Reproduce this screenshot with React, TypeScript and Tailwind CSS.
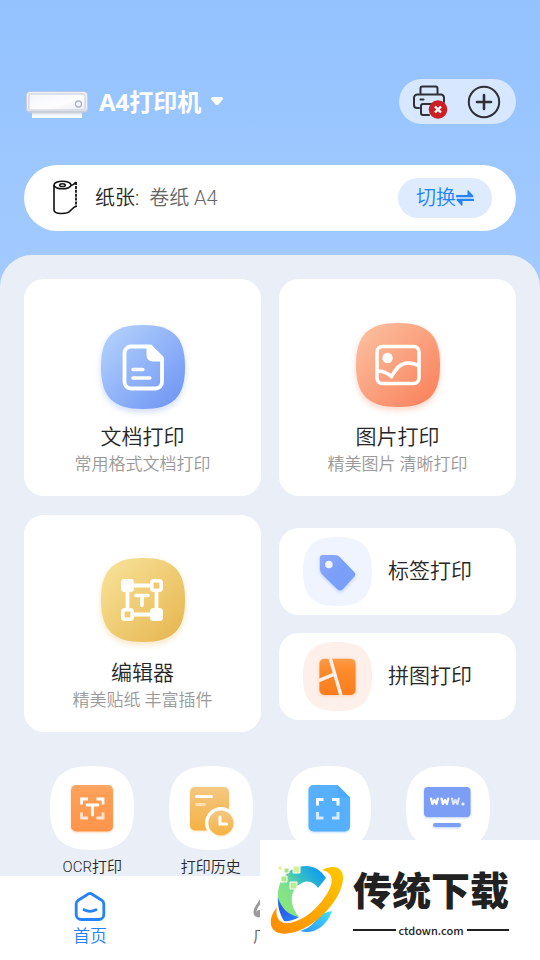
import type { ReactNode } from 'react'

const SQUIRCLE = 'M42 0C72 0 84 12 84 42S72 84 42 84 0 72 0 42 12 0 42 0Z'

interface TileProps {
  id: string
  from: string
  to: string
  className?: string
  children: ReactNode
}

function Tile({ id, from, to, className, children }: TileProps) {
  return (
    <svg viewBox="0 0 84 84" className={className} fill="none" overflow="visible" aria-hidden="true">
      <defs>
        <linearGradient id={id} x1="0" y1="0" x2="1" y2="1">
          <stop offset="0.05" stopColor={from} />
          <stop offset="0.9" stopColor={to} />
        </linearGradient>
      </defs>
      <path d={SQUIRCLE} fill={`url(#${id})`} />
      {children}
    </svg>
  )
}

function PrinterPhoto() {
  return (
    <svg viewBox="0 -6 64 36" className="h-9 w-16" aria-hidden="true">
      <defs>
        <linearGradient id="printer-body" x1="0" y1="0" x2="1" y2="1">
          <stop offset="0" stopColor="#f3f5fa" />
          <stop offset="0.6" stopColor="#fdfdff" />
          <stop offset="1" stopColor="#e9ecf3" />
        </linearGradient>
        <linearGradient id="printer-paper" x1="0" y1="0" x2="0" y2="1">
          <stop offset="0" stopColor="#b9c0cd" />
          <stop offset="0.6" stopColor="#f4f7fc" />
          <stop offset="1" stopColor="#ffffff" />
        </linearGradient>
      </defs>
      <path d="M8 21h50v7H8z" fill="url(#printer-paper)" />
      <rect x="2" y="1.5" width="62" height="21" rx="4" fill="#c9ced8" />
      <rect x="3" y="2" width="60" height="19" rx="3.5" fill="#eff1f6" />
      <rect x="5" y="4" width="56" height="16" rx="1.5" fill="url(#printer-body)" stroke="#c6cbd6" />
      <circle cx="54.5" cy="14" r="3" fill="#f4f6fa" stroke="#aeb5c1" strokeWidth="1.3" />
    </svg>
  )
}

function PrinterOffIcon() {
  return (
    <svg viewBox="-1 0 36 36" className="size-9" fill="none" overflow="visible" aria-hidden="true">
      <g stroke="#2e3033" strokeWidth="2" strokeLinejoin="round" strokeLinecap="round">
        <path d="M8.500 10V4.500a2 2 0 0 1 2-2h13a2 2 0 0 1 2 2V10" />
        <path d="M7 24H5a3 3 0 0 1-3-3v-7a3.500 3.500 0 0 1 3.500-3.500h24A3.500 3.500 0 0 1 32 14v4" />
        <path d="M8.500 15.500h3" />
        <path d="M22 20H11a2 2 0 0 0-2 2v7a2 2 0 0 0 2 2h6" />
      </g>
      <circle cx="26" cy="25.500" r="9.300" fill="#cb1f24" />
      <path d="m23 22.500 6 6m0-6-6 6" stroke="#fff" strokeWidth="2.400" />
    </svg>
  )
}

function AddIcon() {
  return (
    <svg viewBox="0 0 34 34" className="size-[34px]" fill="none" stroke="#2e3033" strokeLinecap="round" aria-hidden="true">
      <circle cx="17" cy="17" r="15.200" strokeWidth="2" />
      <path d="M17 10v14M10 17h14" strokeWidth="2.600" />
    </svg>
  )
}

function PaperRollIcon() {
  return (
    <svg viewBox="0 0 26 36" className="h-9 w-[26px]" fill="none" stroke="#111" strokeWidth="1.600" strokeLinejoin="round" aria-hidden="true">
      <ellipse cx="10.500" cy="5" rx="8.500" ry="3.800" />
      <ellipse cx="10.500" cy="5.200" rx="2.800" ry="1.400" strokeWidth="1.500" />
      <path d="M2 5v25c0 4.500 13 4.500 16 1 2-2.300 4-4 6.500-5" />
      <path d="M19 5.500c2-.5 3.800-1.800 5-3.500" />
      <path d="M24 2v25" strokeWidth="1.800" strokeDasharray="3 0.900" />
    </svg>
  )
}

function SwapIcon() {
  return (
    <svg viewBox="0 0 18 16" className="h-4 w-[18px]" fill="#2482fa" aria-hidden="true">
      <path d="M1 5h10.500V.8c0-.5.6-.7 1-.3l4.700 5c.6.700.200 1.700-.7 1.700H1A1.100 1.100 0 0 1 1 5Z" />
      <path d="M17 11H6.500v4.200c0 .5-.6.700-1 .3l-4.700-5C.2 9.800.600 8.800 1.500 8.800H17a1.100 1.100 0 0 1 0 2.200Z" />
    </svg>
  )
}

function DocumentTile() {
  return (
    <Tile id="tile-doc" from="#b4d2fc" to="#7299f5" className="mb-3 size-21 drop-shadow-[0_3px_3px_rgba(114,153,245,0.35)]">
      <path d="M46 21.500H30a6.500 6.500 0 0 0-6.500 6.500v29a6.500 6.500 0 0 0 6.500 6.500h24.500a6.500 6.500 0 0 0 6.500-6.500V35.500" stroke="#fff" strokeWidth="3.800" />
      <path d="M45.500 19.600h3.700a3 3 0 0 1 2 .8L62 31.200a3 3 0 0 1 .9 2.100V36.500H51.500a6 6 0 0 1-6-6Z" fill="#fff" />
      <path d="M32 44.500h9.800M32 53h16.800" stroke="#fff" strokeWidth="3.600" strokeLinecap="round" />
    </Tile>
  )
}

function PictureTile() {
  return (
    <Tile id="tile-picture" from="#fcc0a0" to="#fa845f" className="mb-[14px] size-21 drop-shadow-[0_3px_3px_rgba(250,132,95,0.35)]">
      <rect x="21" y="23.500" width="42" height="37" rx="5.500" stroke="#fff" strokeWidth="3.600" />
      <circle cx="31.500" cy="35" r="5.200" fill="#fff" />
      <path d="M21 48.500c5-.8 9.500.8 14.500 5 3.500-6.500 8-13.500 16.500-13.500 4 0 7.500.8 11 3" stroke="#fff" strokeWidth="3.600" />
    </Tile>
  )
}

function EditorTile() {
  return (
    <Tile id="tile-editor" from="#f7e298" to="#e8b955" className="mb-[15px] size-21 drop-shadow-[0_3px_3px_rgba(232,185,85,0.35)]">
      <path d="M26.500 27.500h29v29h-29z" stroke="#fff" strokeWidth="3.800" />
      <rect x="20" y="21" width="13" height="13" rx="3.500" fill="#fff" />
      <rect x="49" y="50" width="13" height="13" rx="3.500" fill="#fff" />
      <rect x="50.800" y="22.800" width="9.400" height="9.400" rx="2" fill="#efcb6e" stroke="#fff" strokeWidth="3.600" />
      <rect x="21.800" y="51.800" width="9.400" height="9.400" rx="2" fill="#efcd73" stroke="#fff" strokeWidth="3.600" />
      <path d="M35 37.500h12M41 38v9.500" stroke="#fff" strokeWidth="3.600" strokeLinecap="round" />
    </Tile>
  )
}

function TagTile() {
  return (
    <Tile id="tile-tag" from="#eff4fe" to="#eff4fe" className="size-[69px]">
      <defs>
        <linearGradient id="tag-fill" x1="0" y1="0" x2="0.700" y2="0.700">
          <stop offset="0" stopColor="#8eaaf8" />
          <stop offset="0.700" stopColor="#7a9ff8" />
        </linearGradient>
      </defs>
      <g className="drop-shadow-[0_2px_2px_rgba(122,159,248,0.4)]">
        <path
          d="M24 22h14c3 0 5 .8 7 2.600l17 17.600c2.500 2.600 2.200 4.200 0 6.400L48.500 63.500c-2.200 2.300-4.500 2.300-6.700 0L23.500 45.500c-2-2-3-4.300-3-7V26c0-2.500 1-4 3.500-4Z"
          fill="url(#tag-fill)"
        />
      </g>
      <circle cx="31.500" cy="33.500" r="4.600" fill="#eff4fe" />
    </Tile>
  )
}

function CollageTile() {
  return (
    <Tile id="tile-collage" from="#fdefea" to="#fdefea" className="size-[69px]">
      <defs>
        <linearGradient id="collage-fill" x1="0" y1="0" x2="0" y2="1">
          <stop offset="0" stopColor="#fd9a48" />
          <stop offset="0.300" stopColor="#fd8b2b" />
          <stop offset="1" stopColor="#fb7d1d" />
        </linearGradient>
      </defs>
      <rect x="20" y="20.500" width="44" height="44" rx="6" fill="url(#collage-fill)" className="drop-shadow-[0_1px_2px_rgba(251,125,29,0.3)]" />
      <path d="M33 19.500 46.500 66M19 47l18.500-7.500" stroke="#fdefea" strokeWidth="4.200" />
    </Tile>
  )
}

function OcrTile() {
  return (
    <Tile id="tile-ocr" from="#fff" to="#fff" className="size-21">
      <defs>
        <linearGradient id="ocr-fill" x1="0" y1="0" x2="0" y2="1">
          <stop offset="0" stopColor="#fda668" />
          <stop offset="0.200" stopColor="#fe9e55" />
          <stop offset="1" stopColor="#ff954b" />
        </linearGradient>
      </defs>
      <rect x="21" y="19" width="42" height="46.500" rx="5" fill="url(#ocr-fill)" className="drop-shadow-[0_1px_1px_rgba(255,149,75,0.4)]" />
      <g stroke="#fff" strokeWidth="2.800">
        <path d="M31.500 38.500V33H38M46.500 33H53v5.500" />
        <path d="M31.500 46.500V52H38M46.500 52H53v-5.500" opacity="0.750" />
        <path d="M37 39h11M42.500 39.500V49" strokeLinecap="round" />
      </g>
    </Tile>
  )
}

function HistoryTile() {
  return (
    <Tile id="tile-history" from="#fff" to="#fff" className="size-21">
      <defs>
        <linearGradient id="history-fill" x1="0" y1="0" x2="0" y2="1">
          <stop offset="0" stopColor="#f3c882" />
          <stop offset="1" stopColor="#f6b143" />
        </linearGradient>
      </defs>
      <rect x="21" y="21" width="39" height="43.500" rx="5" fill="url(#history-fill)" className="drop-shadow-[0_1px_1px_rgba(246,177,67,0.3)]" />
      <path d="M27.500 30.500h15" stroke="#fff" strokeWidth="3" strokeLinecap="round" />
      <path d="M27.500 38.500h8" stroke="#fff" strokeWidth="3" strokeLinecap="round" opacity="0.500" />
      <circle cx="52" cy="57" r="16" fill="#fff" />
      <circle cx="52" cy="57" r="12.500" fill="url(#history-fill)" className="drop-shadow-[0_1px_1px_rgba(246,177,67,0.3)]" />
      <path d="M51 51v7h6.500" stroke="#fff" strokeWidth="3" strokeLinecap="round" />
    </Tile>
  )
}

function ScanTile() {
  return (
    <Tile id="tile-scan" from="#fff" to="#fff" className="size-21">
      <path
        d="M26.500 19h24L63 31.500V60.500a5 5 0 0 1-5 5H26.500a5 5 0 0 1-5-5V24a5 5 0 0 1 5-5Z"
        fill="#56b0fe"
        className="drop-shadow-[0_1px_1px_rgba(86,176,254,0.4)]"
      />
      <path d="M50.500 19 63 31.500H53a2.500 2.500 0 0 1-2.500-2.500Z" fill="#4ca9fd" />
      <g stroke="#fff" strokeWidth="3">
        <path d="M30.500 39.500v-6h6M45 33.500h6v6" />
        <path d="M30.500 46v6h6M45 52h6v-6" opacity="0.750" />
      </g>
    </Tile>
  )
}

function WebTile() {
  return (
    <Tile id="tile-web" from="#fff" to="#fff" className="size-21">
      <g fill="#7c9ff5" className="drop-shadow-[0_1px_1px_rgba(124,159,245,0.5)]">
        <rect x="18" y="21" width="46.500" height="30" rx="4" />
        <rect x="27" y="57" width="28" height="4" rx="2" />
      </g>
      <g stroke="#fff" strokeWidth="2.200" strokeLinejoin="round" strokeLinecap="round">
        <path d="m25 32.500 1.400 5.500 2-4 2 4 1.400-5.500" />
        <path d="m35.500 32.500 1.400 5.500 2-4 2 4 1.400-5.500" />
        <path d="m46 32.500 1.400 5.500 2-4 2 4 1.400-5.500" opacity="0.750" />
      </g>
      <circle cx="57" cy="38" r="1.600" fill="#fff" opacity="0.850" />
    </Tile>
  )
}

function HomeIcon() {
  return (
    <svg viewBox="0 0 32 30" className="h-[30px] w-8" fill="none" stroke="#2482fa" strokeWidth="2.800" strokeLinecap="round" aria-hidden="true">
      <path d="M14.200 2 4.300 8.200A4.500 4.500 0 0 0 2.200 12v10.500a5 5 0 0 0 5 5h17.600a5 5 0 0 0 5-5V12a4.500 4.500 0 0 0-2.100-3.800L17.800 2a3.400 3.400 0 0 0-3.600 0Z" />
      <path d="M10 17.800c3.500 1.800 8.500 1.800 12 0" />
    </svg>
  )
}

function SquareIcon() {
  return (
    <svg viewBox="0 0 34 30" className="h-[30px] w-[34px]" fill="none" stroke="#9a9a9a" strokeWidth="3" strokeLinecap="round" aria-hidden="true">
      <path d="M9 6C8 11 2 14 2 20c0 5 6 5 6 1 0-2-3-2-3 0" />
      <path d="M9 6c3-4 13-4 16 0 1 5 7 8 7 14 0 5-6 5-6 1M7 23h20" />
    </svg>
  )
}

function SiteLogo() {
  return (
    <svg viewBox="0 0 76 70" className="h-[70px] w-[76px] shrink-0" aria-hidden="true">
      <defs>
        <linearGradient id="c-top" gradientUnits="userSpaceOnUse" x1="14" y1="44" x2="56" y2="10">
          <stop offset="0" stopColor="#8be67a" />
          <stop offset="0.300" stopColor="#7fe08c" />
          <stop offset="0.600" stopColor="#35bfc4" />
          <stop offset="1" stopColor="#0c98f5" />
        </linearGradient>
        <linearGradient id="c-left" x1="0" y1="0" x2="0.500" y2="1">
          <stop offset="0" stopColor="#2bb4ef" />
          <stop offset="0.400" stopColor="#2456e8" />
          <stop offset="1" stopColor="#2a78f6" />
        </linearGradient>
        <linearGradient id="c-bottom" x1="0" y1="1" x2="1" y2="0">
          <stop offset="0" stopColor="#2c93f6" />
          <stop offset="1" stopColor="#3fe4fc" />
        </linearGradient>
        <linearGradient id="ring" x1="0" y1="1" x2="1" y2="0">
          <stop offset="0" stopColor="#ff8a00" />
          <stop offset="1" stopColor="#ffc800" />
        </linearGradient>
      </defs>
      <path d="M8 30C7 40 10 50 14 56c6 1 11-2 15-4C20 49 12 40 8 30Z" fill="url(#c-left)" />
      <path d="M8 32C7 14 20 1 36 1c8 0 15 4 20 12l-8 10c-4-6-10-8-16-5-12 6-14 20-3 34C18 50 11 43 8 32Z" fill="url(#c-top)" />
      <path d="M30 66c12 4 26-3 32-20-5 1-9 2-12 4-5 8-12 14-20 16Z" fill="url(#c-bottom)" />
      <path
        d="M52 5C62 0 72 1 73 11c1 15-13 36-33 49C22 71 4 72 1 60c-1-7 2-13 6-18-2 8 1 15 8 16 12 1 27-9 37-22C64 21 66 8 52 5Z"
        fill="url(#ring)"
      />
      <g stroke="#fff" strokeWidth="1">
        <path d="M11 11h6v6h-6z" fill="#a9e98a" />
        <path d="M20 17h7v7h-7z" fill="#b6ee91" />
        <path d="M23 1h7v7h-7z" fill="#d9ee9a" />
        <path d="M14 3h5v5h-5z" fill="#a9e37b" />
        <path d="M8 1h4v4H8z" fill="#e1ee8f" />
      </g>
    </svg>
  )
}

function FeatureCard({ icon, title, desc }: { icon: ReactNode; title: string; desc: string }) {
  return (
    <button type="button" className="flex h-[217px] flex-col items-center justify-end rounded-[20px] bg-white pb-[21px]">
      {icon}
      <span className="text-[21px] leading-8">{title}</span>
      <span className="text-[17px] leading-[22px] text-[#999999]">{desc}</span>
    </button>
  )
}

function SmallCard({ icon, title }: { icon: ReactNode; title: string }) {
  return (
    <button type="button" className="flex h-[87px] items-center gap-4 rounded-[20px] bg-white px-6">
      {icon}
      <span className="text-[21px] leading-8">{title}</span>
    </button>
  )
}

const tools = [
  { name: 'OCR打印', icon: <OcrTile />, showName: true },
  { name: '打印历史', icon: <HistoryTile />, showName: true },
  { name: '扫描', icon: <ScanTile />, showName: false },
  { name: '网页', icon: <WebTile />, showName: false },
]

export default function App() {
  return (
    <div className="relative flex h-screen flex-col overflow-hidden bg-linear-to-b from-[#93c2fe] to-[#a8cdff] to-40% font-[Roboto,'Noto_Sans_CJK_SC',sans-serif] font-[350] text-[#262626]">
      <header className="flex flex-col gap-[41px] px-6 pt-[79px] pb-6">
        <div className="flex items-center justify-between">
          <button type="button" className="flex items-center text-white">
            <PrinterPhoto />
            <span className="ml-[11px] font-['Noto_Sans','Noto_Sans_CJK_SC',sans-serif] text-2xl leading-8 font-bold">A4打印机</span>
            <svg viewBox="0 0 12 9" className="ml-[10px] h-[9px] w-3" fill="currentColor" aria-hidden="true">
              <path d="M2 0h8c1.800 0 2.500 1.700 1.300 3L7.400 7.500a2 2 0 0 1-2.800 0L.7 3C-.5 1.700.2 0 2 0Z" />
            </svg>
          </button>
          <div className="flex h-[45px] items-center gap-5 rounded-full bg-[#d6e7ff] pr-[15px] pl-3">
            <button type="button" aria-label="打印机未连接">
              <PrinterOffIcon />
            </button>
            <button type="button" aria-label="添加">
              <AddIcon />
            </button>
          </div>
        </div>

        <div className="flex h-[66px] items-center rounded-full bg-white pr-6 pl-7">
          <PaperRollIcon />
          <span className="ml-[17px] text-[20px]">纸张:</span>
          <span className="ml-[10px] flex-1 text-[20px] text-[#666666]">卷纸 A4</span>
          <button type="button" className="flex h-10 items-center rounded-full bg-[#deebfe] px-[18px] text-[20px] text-[#2482fa]">
            切换
            <SwapIcon />
          </button>
        </div>
      </header>

      <main className="min-h-0 flex-1 overflow-hidden rounded-t-[32px] bg-[#eaeff7] px-6 pt-6">
        <div className="grid grid-cols-2 items-center gap-x-[18px] gap-y-[19px]">
          <FeatureCard icon={<DocumentTile />} title="文档打印" desc="常用格式文档打印" />
          <FeatureCard icon={<PictureTile />} title="图片打印" desc="精美图片 清晰打印" />
          <FeatureCard icon={<EditorTile />} title="编辑器" desc="精美贴纸 丰富插件" />
          <div className="flex flex-col gap-[18px]">
            <SmallCard icon={<TagTile />} title="标签打印" />
            <SmallCard icon={<CollageTile />} title="拼图打印" />
          </div>
        </div>

        <div className="mt-[34px] grid grid-cols-4 px-[9px]">
          {tools.map((tool) => (
            <button key={tool.name} type="button" aria-label={tool.name} className="flex flex-col items-center gap-[7px]">
              {tool.icon}
              {tool.showName && <span className="text-[15px] leading-5">{tool.name}</span>}
            </button>
          ))}
        </div>
      </main>

      <nav className="grid h-[84px] shrink-0 grid-cols-3 bg-white">
        <a href="#home" className="flex flex-col items-center pt-4 text-[17px] leading-7 text-[#2482fa]">
          <HomeIcon />
          首页
        </a>
        <a href="#square" className="flex flex-col items-center pt-4 text-[17px] leading-7 text-[#666666]">
          <SquareIcon />
          广场
        </a>
      </nav>

      <a href="#ctdown" className="absolute right-0 bottom-0 flex h-[120px] w-[280px] items-center bg-white pl-[10px] text-[#212121]">
        <SiteLogo />
        <span className="ml-[7px] flex flex-col items-center">
          <span className="text-[39px] leading-[60px] font-black">传统下载</span>
          <span className="flex w-full items-center gap-[3px] font-['Noto_Sans_CJK_SC',sans-serif] text-[11px] leading-4 font-medium">
            <span className="h-[2px] flex-1 bg-current" />
            ctdown.com
            <span className="h-[2px] flex-1 bg-current" />
          </span>
        </span>
      </a>
    </div>
  )
}
